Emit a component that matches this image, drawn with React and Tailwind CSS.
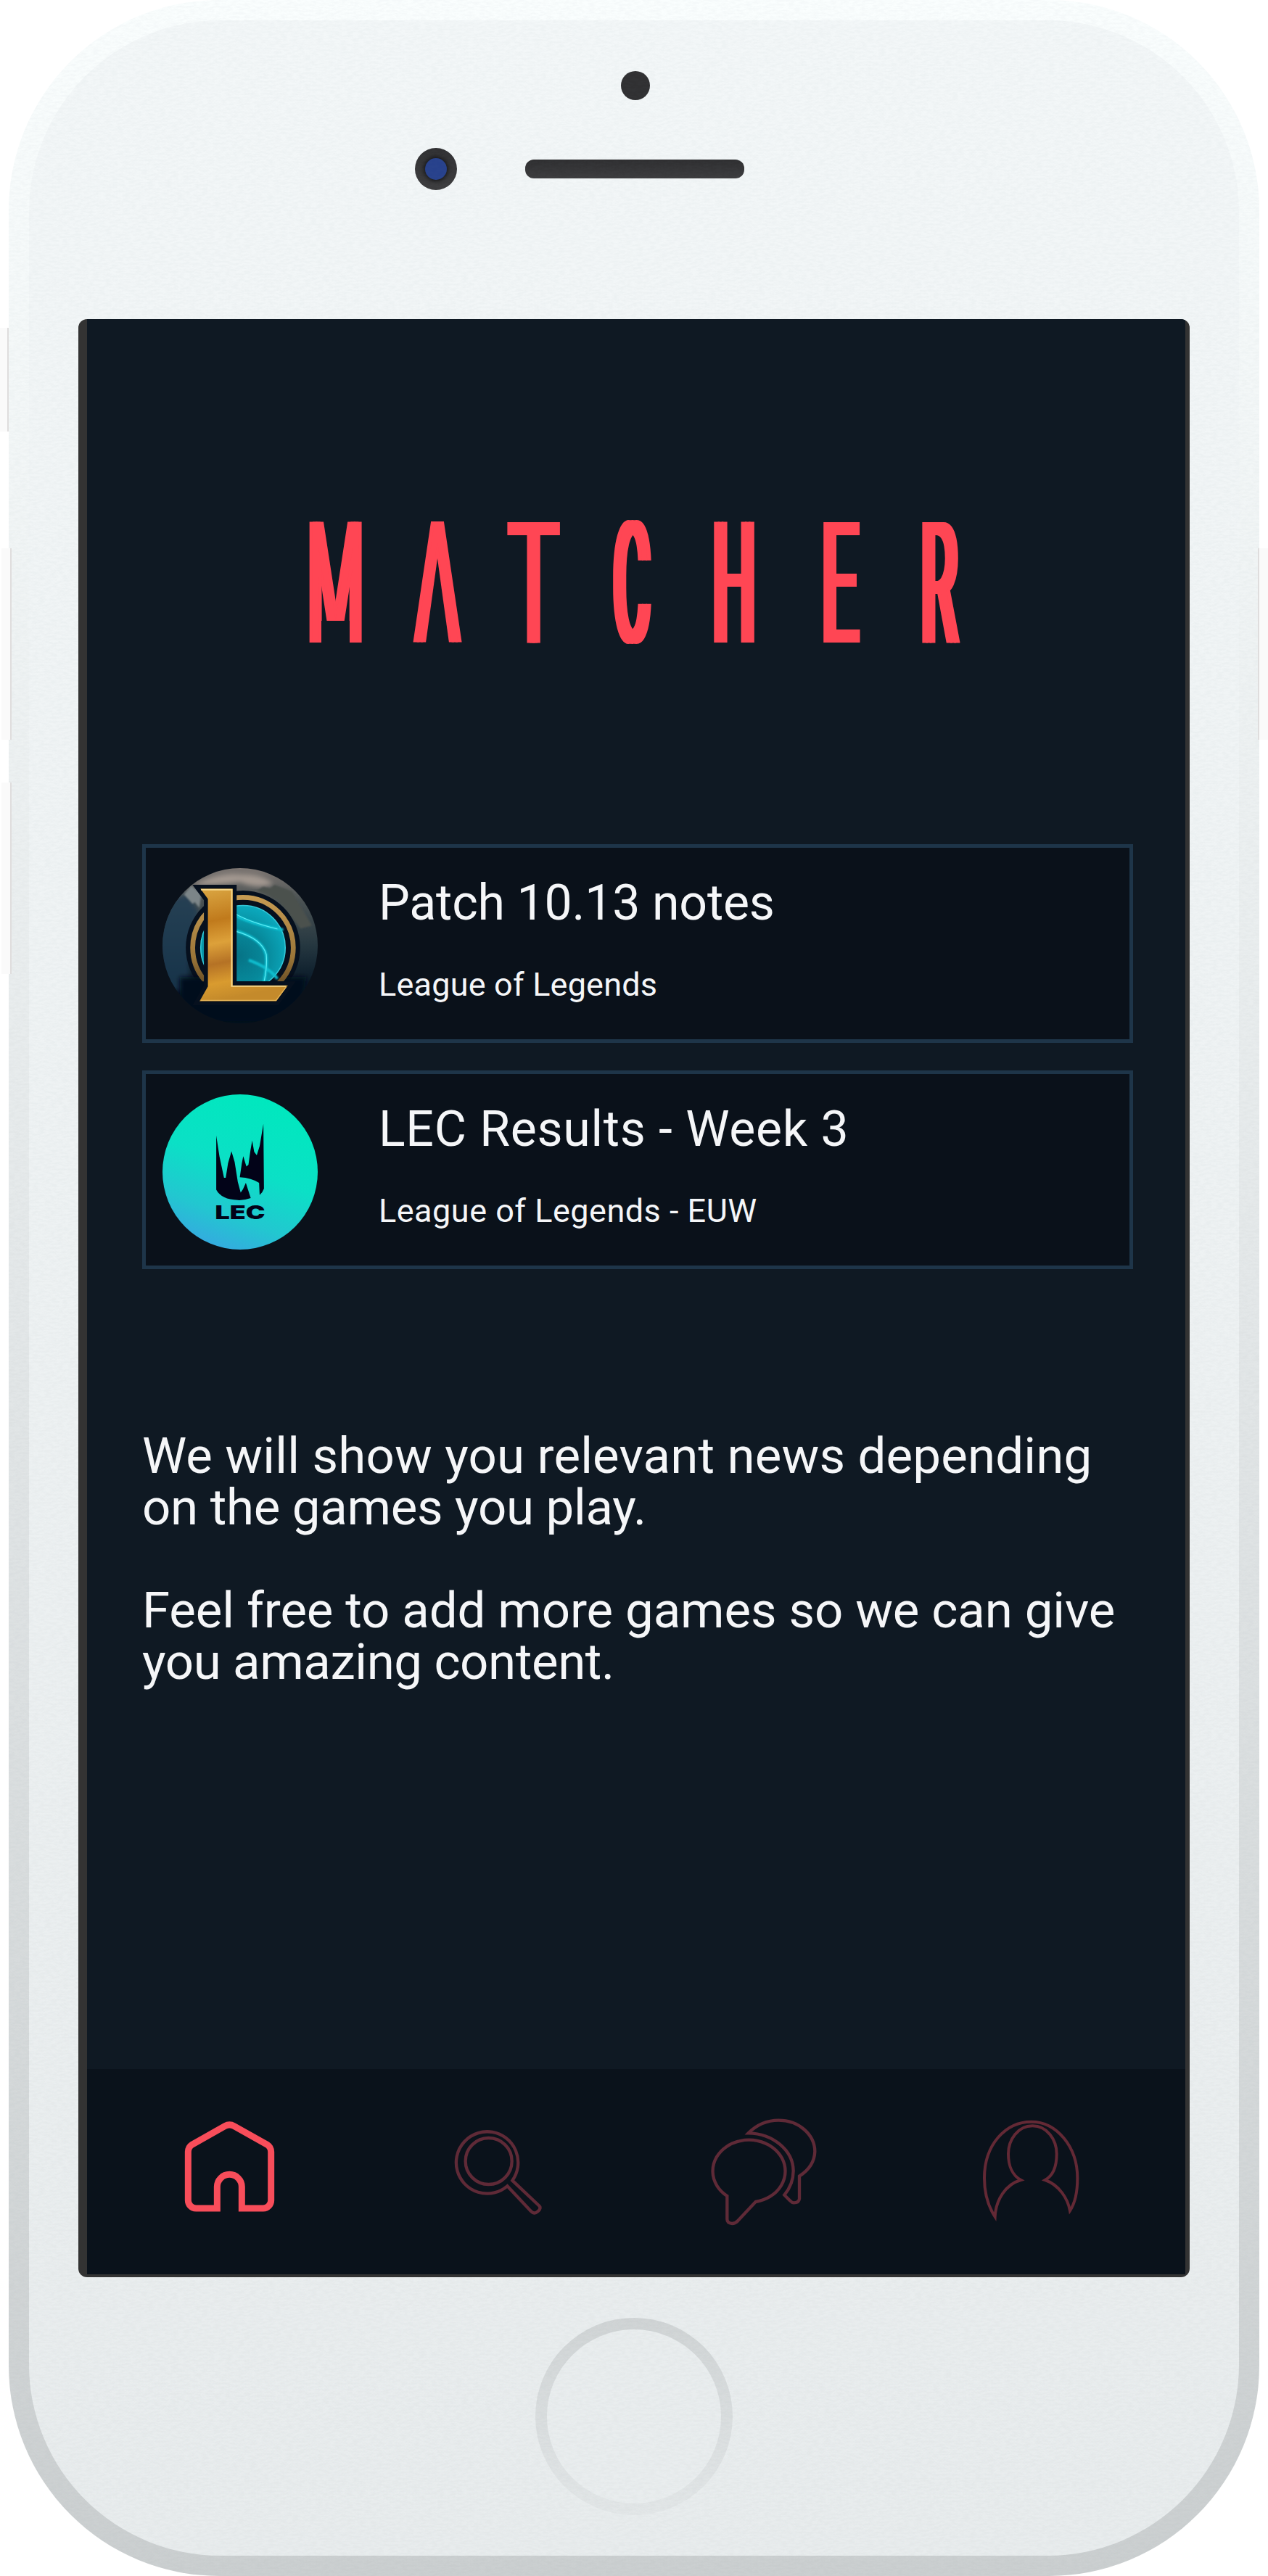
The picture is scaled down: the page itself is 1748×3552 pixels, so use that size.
const LETTERS = [
  { char: "M", box: "w-[75px] mr-[69px]", glyph: "scale-x-[0.385] [text-shadow:11px_0_#ff4654,-11px_0_#ff4654]" },
  { char: "A", box: "w-[68px] mr-[62px]", glyph: "scale-x-[0.39] [text-shadow:13px_0_#ff4654,-13px_0_#ff4654]" },
  { char: "T", box: "w-[74px] mr-[70px]", glyph: "scale-x-[0.51] [text-shadow:7px_0_#ff4654,-7px_0_#ff4654]" },
  { char: "C", box: "w-[54px] mr-[86px]", glyph: "scale-x-[0.325] translate-x-[1px] [text-shadow:17px_0_#ff4654,-17px_0_#ff4654]" },
  { char: "H", box: "w-[58px] mr-[93px]", glyph: "scale-x-[0.354] [text-shadow:15px_0_#ff4654,-15px_0_#ff4654]" },
  { char: "E", box: "w-[52px] mr-[83px]", glyph: "scale-x-[0.39] -translate-x-[2px] [text-shadow:12px_0_#ff4654,-12px_0_#ff4654]" },
  { char: "R", box: "w-[53px]", glyph: "scale-x-[0.345] -translate-x-[1px] [text-shadow:15px_0_#ff4654,-15px_0_#ff4654]" },
];

function Wordmark() {
  return (
    <h1 className="mt-[284px] ml-[305px] flex h-[166px] text-[233px] leading-[166px] font-normal text-[#ff4654]">
      {LETTERS.map(({ char, box, glyph }) => (
        <span key={char} className={`relative flex shrink-0 justify-center ${box}`}>
          <span className={`inline-block shrink-0 ${glyph}`}>{char}</span>
          {char === "A" && (
            <svg className="absolute top-[46px] left-[17px]" width="34" height="120" viewBox="0 0 34 120">
              <path d="M17 0 L0.5 120 H33.5 Z" fill="#0f1923" />
            </svg>
          )}
          {char === "M" && <span className="absolute top-[132px] left-[18px] h-[34px] w-[39px] bg-[#0f1923]" />}
        </span>
      ))}
    </h1>
  );
}

function LeagueLogo() {
  return (
    <svg className="mt-7 size-[214px] shrink-0" viewBox="0 0 540 540">
      <defs>
        <clipPath id="lolClip"><circle cx="270" cy="270" r="270" /></clipPath>
        <clipPath id="ringClip"><path d="M0 0H540V394H0Z" /></clipPath>
        <linearGradient id="sky" x1="0" y1="0" x2="0" y2="1">
          <stop offset="0" stopColor="#7d7672" />
          <stop offset="0.2" stopColor="#4c5354" />
          <stop offset="0.5" stopColor="#253740" />
          <stop offset="0.75" stopColor="#071827" />
          <stop offset="1" stopColor="#020e1b" />
        </linearGradient>
        <linearGradient id="gold" x1="0" y1="0" x2="0.15" y2="1">
          <stop offset="0" stopColor="#dba743" />
          <stop offset="0.3" stopColor="#c07a1c" />
          <stop offset="0.5" stopColor="#dda13a" />
          <stop offset="0.68" stopColor="#b57225" />
          <stop offset="0.85" stopColor="#d99b2f" />
          <stop offset="1" stopColor="#c48a2b" />
        </linearGradient>
        <linearGradient id="ring" x1="0" y1="0" x2="0" y2="1">
          <stop offset="0" stopColor="#c59a52" />
          <stop offset="0.6" stopColor="#9a7538" />
          <stop offset="1" stopColor="#4f3a1c" />
        </linearGradient>
        <radialGradient id="orb" cx="0.45" cy="0.6" r="0.6">
          <stop offset="0" stopColor="#067386" />
          <stop offset="0.55" stopColor="#07899b" />
          <stop offset="1" stopColor="#0ba9bd" />
        </radialGradient>
        <filter id="soft" x="-20%" y="-20%" width="140%" height="140%"><feGaussianBlur stdDeviation="8" /></filter>
        <filter id="glow" x="-20%" y="-20%" width="140%" height="140%"><feGaussianBlur stdDeviation="3" /></filter>
      </defs>
      <g clipPath="url(#lolClip)">
        <rect width="540" height="540" fill="url(#sky)" />
        <path d="M-20 120 L90 90 L125 150 L95 260 L90 430 L0 420Z" fill="#1b3a52" opacity="0.8" filter="url(#soft)" />
        <path d="M105 60 Q190 15 270 22 Q350 20 385 55 Q330 75 270 48 Q190 60 105 60Z" fill="#a39890" filter="url(#soft)" />
        <path d="M75 92 L100 62 L135 90 L128 138 L112 118 L105 125Z" fill="#7c8588" filter="url(#glow)" />
        <path d="M330 78 L350 65 L375 70 L390 58 L450 80 L520 200 L480 210 L400 110Z" fill="#4b514e" filter="url(#glow)" />
        <circle cx="280" cy="277" r="199" fill="#06101e" />
        <path d="M60 380 H500 L480 540 H60Z" fill="#020f1d" filter="url(#soft)" />
        <g clipPath="url(#ringClip)">
          <circle cx="280" cy="277" r="175" fill="#06101e" stroke="url(#ring)" strokeWidth="17" />
          <circle cx="280" cy="277" r="147" fill="url(#orb)" stroke="#35c8d8" strokeWidth="4" />
          <path d="M255 165 Q310 195 420 215 M255 218 Q345 245 360 300 Q366 340 352 400 M300 320 Q370 345 400 385" fill="none" stroke="#10bfd0" strokeWidth="10" filter="url(#glow)" />
          <path d="M255 160 Q310 190 400 212 M255 220 Q345 245 361 300 Q365 340 354 392" fill="none" stroke="#5cecf5" strokeWidth="3" />
        </g>
        <path d="M132 72 H244 V408 H436 L396 463 H129 L158 412 V107Z" fill="#06101e" stroke="#06101e" strokeWidth="28" />
        <path d="M132 72 H244 V408 H436 L396 463 H129 L158 412 V107Z" fill="url(#gold)" />
        <path d="M134 75 H241 V411 H430" fill="none" stroke="#f6d88b" strokeWidth="5" />
        <path d="M133 460 H395 L430 414" fill="none" stroke="#e7b75a" strokeWidth="3" />
      </g>
    </svg>
  );
}

function LecLogo() {
  return (
    <svg className="mt-7 size-[214px] shrink-0" viewBox="0 0 540 540">
      <defs>
        <linearGradient id="lec" x1="0.62" y1="0" x2="0.25" y2="1">
          <stop offset="0" stopColor="#00e8be" />
          <stop offset="0.45" stopColor="#0be0c6" />
          <stop offset="0.75" stopColor="#22c7d0" />
          <stop offset="1" stopColor="#38a5e2" />
        </linearGradient>
      </defs>
      <circle cx="270" cy="270" r="270" fill="url(#lec)" />
      <g fill="#020318">
        <path d="M187 143 L198 215 L214 290 H220 L228 240 L240 198 L251 235 L262 305 L272 342 L280 330 L290 308 L297 330 L307 361 Q285 369 262 368 Q205 366 187 332Z" />
        <path d="M269 288 L276 240 L281 215 L287 235 L292 251 L299 245 L306 195 L312 161 L319 200 L328 212 L338 180 L351 103 L353 328 Q348 342 338 350 L336 308 Q310 290 269 288Z" />
        <text x="183" y="433" fontFamily="Inter, sans-serif" fontWeight="900" fontSize="65" textLength="174" lengthAdjust="spacingAndGlyphs">LEC</text>
      </g>
    </svg>
  );
}

function NewsCard({ logo, title, subtitle, titleClass, subtitleClass }) {
  return (
    <article className="flex h-[274px] w-[1366px] border-5 border-[#1e3549] bg-[#0a111a] pl-[23px] text-[#f5f6f8]">
      {logo}
      <div className="ml-[84px] pt-9">
        <h2 className={`text-[68px] leading-[80px] font-normal whitespace-nowrap ${titleClass}`}>{title}</h2>
        <p className={`mt-[46px] text-[45px] leading-[54px] whitespace-nowrap ${subtitleClass}`}>{subtitle}</p>
      </div>
    </article>
  );
}

function NavBar() {
  return (
    <nav className="mt-auto flex h-[283px] items-start bg-[#0a121b] pl-[110px]">
      <svg className="mt-[37px] size-[180px]" viewBox="0 0 540 540" fill="none" stroke="#f84d5a" strokeWidth="27">
        <path d="M208 465 V376 A51 51 0 0 1 310 376 V465 H398 A33 33 0 0 0 431 432 V232 Q431 212 414 201 L278 125 Q259 114 240 125 L105 201 Q88 212 88 232 V432 A33 33 0 0 0 121 465 Z" />
      </svg>
      <svg className="mt-[57px] ml-[200px] size-[160px]" viewBox="0 0 480 480" fill="none" stroke="#5f2a37" strokeWidth="13">
        <circle cx="191" cy="210" r="96" />
        <path d="M289 290 A128 128 0 1 0 268 313 L365 416 Q380 432 394 418 Q411 404 398 393 Z" />
      </svg>
      <svg className="mt-[47px] ml-[190px] h-[190px] w-[180px]" viewBox="0 0 540 570" fill="none" stroke="#5f2a37" strokeWidth="13">
        <path d="M127 384 A150 129 0 1 1 245 408 L172 486 Q162 498 148 498 Q127 496 127 480 Z" />
        <path d="M215 124 Q268 71 340 71 A150 130 0 0 1 490 200 Q488 262 426 302 V395 Q424 412 403 412 Q395 412 388 404 L364 380 Q401 335 401 280 A190 158 0 0 0 215 124 Z" />
      </svg>
      <svg className="mt-[47px] ml-[200px] h-[190px] w-[160px]" viewBox="0 0 480 570" fill="none" stroke="#632935" strokeWidth="12">
        <path d="M95 470 C62 420 51 360 51 310 C51 170 140 77 245 77 C350 77 436 180 436 310 C436 370 425 415 405 445 C396 395 360 338 302 318 C335 300 350 260 350 210 C350 150 310 94 250 94 C190 94 150 150 150 210 C150 260 168 300 202 318 C140 335 98 400 95 470Z" />
      </svg>
    </nav>
  );
}

function Screen() {
  return (
    <main className="mt-[178px] ml-[68px] h-[2700px] w-[1532px] overflow-hidden rounded-[12px] bg-[#333333] pr-[6px] pb-1 pl-3">
      <div className="flex h-full flex-col bg-[#0f1923]">
        <Wordmark />
        <section className="mt-[274px] ml-[76px] flex flex-col gap-[38px]">
          <NewsCard logo={<LeagueLogo />} title="Patch 10.13 notes" subtitle="League of Legends" titleClass="tracking-[-0.2px]" subtitleClass="tracking-[0.2px]" />
          <NewsCard logo={<LecLogo />} title="LEC Results - Week 3" subtitle="League of Legends - EUW" titleClass="tracking-[0.7px]" subtitleClass="tracking-[0.5px]" />
        </section>
        <section className="mt-[222px] ml-[76px] flex flex-col gap-[71px] text-[69px] leading-[71px] whitespace-nowrap text-[#f5f6f8]">
          <p>
            <span className="tracking-[0.16px]">We will show you relevant news depending</span>
            <br />
            <span className="tracking-[-0.3px]">on the games you play.</span>
          </p>
          <p>
            <span className="tracking-[-0.12px]">Feel free to add more games so we can give</span>
            <br />
            <span className="tracking-[-0.4px]">you amazing content.</span>
          </p>
        </section>
        <NavBar />
      </div>
    </main>
  );
}

export default function App() {
  return (
    <div className="relative h-[3552px] w-[1748px] overflow-hidden bg-white font-['Roboto',sans-serif]">
      <div className="ml-3 h-[3552px] w-[1724px] rounded-[290px] bg-linear-to-b from-[#fafefe] via-[#e4e8e9] to-[#cbcfd0] p-7">
        <div className="flex h-full flex-col rounded-[264px] bg-linear-to-b from-[#f3f7f8] to-[#e8eced]">
          <div className="mt-[70px] ml-[816px] size-10 rounded-full bg-[#303032]" />
          <div className="mt-[66px] flex items-center pl-[532px]">
            <div className="flex size-[58px] items-center justify-center rounded-full bg-linear-to-b from-[#303032] to-[#3d3d3f]">
              <div className="size-[30px] rounded-full bg-[#27418c] shadow-[0_0_5px_2px_#18181a]" />
            </div>
            <div className="ml-[94px] h-[26px] w-[302px] rounded-[12px] bg-linear-to-b from-[#2e2e30] to-[#3c3c3e]" />
          </div>
          <Screen />
          <div className="mt-14 ml-[698px] size-[272px] rounded-full bg-linear-to-b from-[#d0d4d5] to-[#e3e7e8] p-4">
            <div className="size-full rounded-full bg-[#e9edee]" />
          </div>
        </div>
      </div>
      <svg className="pointer-events-none absolute inset-x-3 top-0 h-[3552px] w-[1724px] rounded-[290px] opacity-[0.03]">
        <filter id="grain" x="0" y="0" width="100%" height="100%">
          <feTurbulence type="fractalNoise" baseFrequency="0.12 0.35" numOctaves="3" />
          <feColorMatrix type="matrix" values="0 0 0 0 0.2  0 0 0 0 0.25  0 0 0 0 0.28  3 0 0 0 -1" />
        </filter>
        <clipPath id="bodyOnly">
          <path d="M0 0H1724V3552H0Z M96 440V3140H1628V440Z" clipRule="evenodd" />
        </clipPath>
        <path d="M0 0H1724V3552H0Z" clipPath="url(#bodyOnly)" filter="url(#grain)" />
      </svg>
      <div className="absolute top-[452px] left-0 h-[143px] w-3 border-r-2 border-[#dfdddd] bg-[#fafafa]" />
      <div className="absolute top-[756px] left-[2px] h-[264px] w-[14px] border-r-2 border-[#dfdddd] bg-[#fafafa]" />
      <div className="absolute top-[1079px] left-[2px] h-[264px] w-[14px] border-r-2 border-[#dfdddd] bg-[#fafafa]" />
      <div className="absolute top-[756px] left-[1734px] h-[264px] w-[14px] border-l-2 border-[#dfdddd] bg-[#fafafa]" />
    </div>
  );
}
